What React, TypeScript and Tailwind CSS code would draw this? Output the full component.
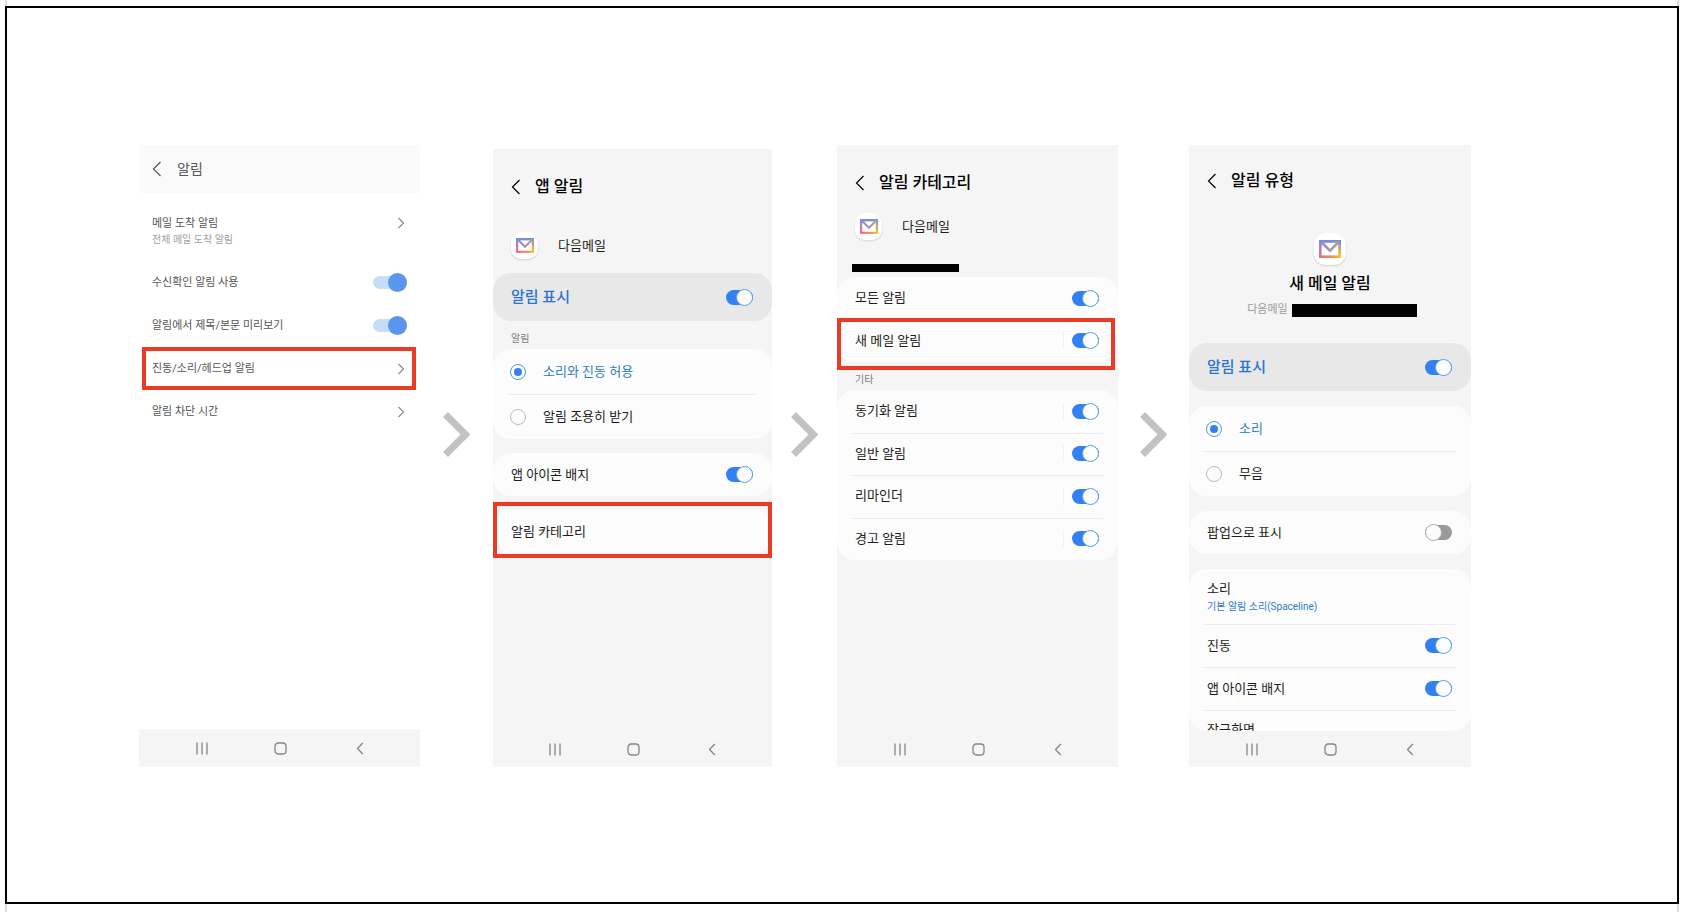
import { useId, type ReactNode } from "react";
import clsx from "clsx";

function BackIcon() {
  return (
    <svg viewBox="0 0 10 16" className="h-4 w-2.5" fill="none" aria-hidden="true">
      <path d="M8.5 1 1.5 8l7 7" stroke="currentColor" strokeWidth="1.2" />
    </svg>
  );
}

function ForwardIcon() {
  return (
    <svg viewBox="0 0 10 12" className="h-3 w-2.5" fill="none" aria-hidden="true">
      <path d="m1.5 1 5 5-5 5" stroke="#8a8a8a" strokeWidth="1.2" />
    </svg>
  );
}

function StepArrow() {
  return (
    <div className="flex justify-center self-start pt-[267px]">
      <svg viewBox="0 0 27 45" className="h-[45px] w-[27px]" fill="none" aria-hidden="true">
        <path d="M2.5 2.5 22.5 22.5l-20 20" stroke="#c2c2c2" strokeWidth="7" />
      </svg>
    </div>
  );
}

function MailLogo({ large = false }: { large?: boolean }) {
  const id = useId();
  return (
    <span
      className={clsx(
        "flex shrink-0 items-center justify-center bg-white shadow-[0_1px_2px_rgba(0,0,0,0.15)]",
        large ? "size-8 rounded-xl" : "size-[27px] rounded-[10px]",
      )}
    >
      <svg
        viewBox="0 0 22 18"
        className={large ? "h-[18px] w-[22px]" : "h-[15px] w-[18px]"}
        fill="none"
        aria-hidden="true"
      >
        <defs>
          <linearGradient id={`${id}-frame`} x1="0" y1="0" x2="1" y2="0">
            <stop offset="0" stopColor="#ea6a8c" />
            <stop offset="0.55" stopColor="#f08a5c" />
            <stop offset="1" stopColor="#f8bc2c" />
          </linearGradient>
          <linearGradient id={`${id}-fade`} x1="0" y1="0" x2="0" y2="1">
            <stop offset="0" stopColor="#6f8fe0" />
            <stop offset="0.2" stopColor="#7f92dc" stopOpacity="0.8" />
            <stop offset="0.85" stopColor="#9a80d8" stopOpacity="0" />
          </linearGradient>
          <linearGradient id={`${id}-flap`} x1="0" y1="0" x2="1" y2="0">
            <stop offset="0" stopColor="#7f8ee6" />
            <stop offset="0.5" stopColor="#b392a8" />
            <stop offset="1" stopColor="#a0a494" />
          </linearGradient>
        </defs>
        <rect x="1.3" y="1.3" width="19.4" height="15.4" stroke={`url(#${id}-frame)`} strokeWidth="2.6" />
        <rect x="1.3" y="1.3" width="19.4" height="15.4" stroke={`url(#${id}-fade)`} strokeWidth="2.6" />
        <path d="m2 1.8 9 8.8 9-8.8" stroke={`url(#${id}-flap)`} strokeWidth="2.6" />
      </svg>
    </span>
  );
}

function Switch({ id, on = true }: { id: string; on?: boolean }) {
  return (
    <input
      id={id}
      type="checkbox"
      role="switch"
      defaultChecked={on}
      className="relative h-[17px] w-[27px] shrink-0 appearance-none before:absolute before:inset-x-0 before:inset-y-px before:rounded-full before:bg-[#999] after:absolute after:left-0 after:size-[17px] after:rounded-full after:border after:border-[#aaa] after:bg-[#fcfcfc] checked:before:bg-[#3380f5] checked:after:left-2.5 checked:after:border-[#5b9fe0]"
    />
  );
}

function LightSwitch({ id }: { id: string }) {
  return (
    <input
      id={id}
      type="checkbox"
      role="switch"
      defaultChecked
      className="relative h-[19px] w-[34px] shrink-0 appearance-none before:absolute before:inset-x-0 before:inset-y-[3px] before:rounded-full before:bg-[#ddd] after:absolute after:left-0 after:size-[19px] after:rounded-full after:bg-[#aaa] checked:before:bg-[#c7dcfa] checked:after:left-[15px] checked:after:bg-[#5a95ef]"
    />
  );
}

function Highlight({ className }: { className: string }) {
  return (
    <div className={clsx("pointer-events-none absolute border-4 border-[#ea3c24]", className)} />
  );
}

function Card({ className, children }: { className: string; children: ReactNode }) {
  return (
    <div className={clsx("relative flex shrink-0 flex-col rounded-[18px] bg-[#fcfcfc]", className)}>
      {children}
    </div>
  );
}

function Divider() {
  return <div className="mx-[15px] -mb-px h-px shrink-0 bg-[#ececec]" />;
}

function SwitchRow({
  label,
  on = true,
  separated = false,
}: {
  label: string;
  on?: boolean;
  separated?: boolean;
}) {
  const id = useId();
  return (
    <div className="flex flex-1 items-center justify-between pr-[19px] pl-[18px]">
      <label htmlFor={id} className="text-[13px] leading-5">
        {label}
      </label>
      <span className={clsx("flex", separated && "border-l border-[#f1f1f1] pl-2")}>
        <Switch id={id} on={on} />
      </span>
    </div>
  );
}

function RadioRow({
  name,
  label,
  checked = false,
}: {
  name: string;
  label: string;
  checked?: boolean;
}) {
  return (
    <label className="flex flex-1 items-center gap-[17px] px-[17px] text-[13px] leading-5 has-checked:text-[#2f7cc4]">
      <input
        type="radio"
        name={name}
        defaultChecked={checked}
        className="relative size-4 shrink-0 appearance-none rounded-full border border-[#bbb] checked:border-[#4f97dc] checked:after:absolute checked:after:inset-[3px] checked:after:rounded-full checked:after:bg-[#3380f5]"
      />
      {label}
    </label>
  );
}

function MainSwitch({ className }: { className: string }) {
  const id = useId();
  return (
    <div
      className={clsx(
        "flex h-12 shrink-0 items-center justify-between rounded-[18px] bg-[#e8e8e8] pr-[19px] pl-[18px]",
        className,
      )}
    >
      <label htmlFor={id} className="text-[15px] leading-6 font-medium text-[#2a74d0]">
        알림 표시
      </label>
      <Switch id={id} />
    </div>
  );
}

function ScreenTitle({ className, children }: { className: string; children: ReactNode }) {
  return (
    <header
      className={clsx("flex h-6 shrink-0 items-center gap-3.5 pl-[18px] text-black", className)}
    >
      <button type="button" aria-label="뒤로">
        <BackIcon />
      </button>
      <h2 className="text-base font-medium">{children}</h2>
    </header>
  );
}

function AppRow({ className }: { className: string }) {
  return (
    <div className={clsx("flex h-[43px] shrink-0 items-center gap-5 pl-[18px]", className)}>
      <MailLogo />
      <span className="text-[13px] leading-5">다음메일</span>
    </div>
  );
}

function GroupLabel({ children }: { children: ReactNode }) {
  return (
    <div className="flex h-7 shrink-0 items-end pb-0.5 pl-[18px] text-[10px] leading-4 text-[#808080]">
      {children}
    </div>
  );
}

function NavBar({ className = "h-9" }: { className?: string }) {
  return (
    <nav
      className={clsx(
        "mt-auto grid shrink-0 grid-cols-3 bg-[#f5f5f5] pr-[21px] pl-[23px] text-[#858585]",
        className,
      )}
    >
      <button type="button" aria-label="최근 앱" className="flex items-center justify-center">
        <svg viewBox="0 0 12 13" className="h-[13px] w-3" fill="none" aria-hidden="true">
          <path d="M1 .5v12M6 .5v12M11 .5v12" stroke="currentColor" strokeWidth="1.3" />
        </svg>
      </button>
      <button type="button" aria-label="홈" className="flex items-center justify-center">
        <svg viewBox="0 0 13 13" className="size-[13px]" fill="none" aria-hidden="true">
          <rect x="1" y="1" width="11" height="11" rx="3.2" stroke="currentColor" strokeWidth="1.3" />
        </svg>
      </button>
      <button type="button" aria-label="뒤로" className="flex items-center justify-center">
        <svg viewBox="0 0 8 13" className="h-[13px] w-2" fill="none" aria-hidden="true">
          <path d="m6.8 1-5.3 5.5L6.8 12" stroke="currentColor" strokeWidth="1.3" />
        </svg>
      </button>
    </nav>
  );
}

function Phone({ className, children }: { className: string; children: ReactNode }) {
  return <section className={clsx("flex flex-col overflow-hidden", className)}>{children}</section>;
}

function MailSettings() {
  const receiptId = useId();
  const previewId = useId();
  return (
    <Phone className="h-[622px] bg-white text-[#555]">
      <header className="flex h-12 shrink-0 items-center gap-[15px] bg-[#fafafa] pl-[13px]">
        <button type="button" aria-label="뒤로">
          <BackIcon />
        </button>
        <h2 className="text-sm">알림</h2>
      </header>
      <div className="pt-2 text-[11px] leading-4">
        <button
          type="button"
          className="flex h-[60px] w-full items-start justify-between px-[13px] pt-[15px] text-left"
        >
          <span>
            <span className="block">메일 도착 알림</span>
            <span className="block text-[10px] text-[#a0a0a0]">전체 메일 도착 알림</span>
          </span>
          <span className="flex h-3.5 items-center">
            <ForwardIcon />
          </span>
        </button>
        <div className="flex h-[43px] items-center justify-between px-[13px]">
          <label htmlFor={receiptId}>수신확인 알림 사용</label>
          <LightSwitch id={receiptId} />
        </div>
        <div className="flex h-[43px] items-center justify-between px-[13px]">
          <label htmlFor={previewId}>알림에서 제목/본문 미리보기</label>
          <LightSwitch id={previewId} />
        </div>
        <div className="relative">
          <button type="button" className="flex h-[43px] w-full items-center justify-between px-[13px]">
            진동/소리/헤드업 알림
            <ForwardIcon />
          </button>
          <Highlight className="inset-y-0 right-1 left-[3px]" />
        </div>
        <button type="button" className="flex h-[43px] w-full items-center justify-between px-[13px]">
          알림 차단 시간
          <ForwardIcon />
        </button>
      </div>
      <NavBar className="h-[38px]" />
    </Phone>
  );
}

function AppNotifications() {
  return (
    <Phone className="h-[618px] bg-[#f5f5f5] text-[#1c1c1c]">
      <ScreenTitle className="mt-[26px]">앱 알림</ScreenTitle>
      <AppRow className="mt-[25px]" />
      <MainSwitch className="mt-1.5" />
      <GroupLabel>알림</GroupLabel>
      <Card className="h-[90px]">
        <RadioRow name="alert" label="소리와 진동 허용" checked />
        <Divider />
        <RadioRow name="alert" label="알림 조용히 받기" />
      </Card>
      <Card className="mt-3.5 h-[43px]">
        <SwitchRow label="앱 아이콘 배지" />
      </Card>
      <Card className="mt-3.5 h-[43px]">
        <button type="button" className="flex-1 px-[18px] text-left text-[13px] leading-5">
          알림 카테고리
        </button>
        <Highlight className="inset-x-0 -top-2 -bottom-[5px]" />
      </Card>
      <NavBar />
    </Phone>
  );
}

const otherCategories = ["동기화 알림", "일반 알림", "리마인더", "경고 알림"];

function NotificationCategories() {
  return (
    <Phone className="h-[622px] bg-[#f5f5f5] text-[#1c1c1c]">
      <ScreenTitle className="mt-[26px]">알림 카테고리</ScreenTitle>
      <AppRow className="mt-2.5" />
      <div className="mt-4 ml-[15px] h-2 w-[107px] shrink-0 bg-black" />
      <Card className="mt-[5px] h-[85px]">
        <SwitchRow label="모든 알림" />
        <Divider />
        <SwitchRow label="새 메일 알림" separated />
        <Highlight className="top-[41px] right-[3px] -bottom-2 left-0" />
      </Card>
      <GroupLabel>기타</GroupLabel>
      <Card className="h-[170px]">
        {otherCategories.map((label, i) => (
          <div key={label} className="flex flex-1 flex-col">
            {i > 0 && <Divider />}
            <SwitchRow label={label} separated />
          </div>
        ))}
      </Card>
      <NavBar />
    </Phone>
  );
}

function NotificationType() {
  return (
    <Phone className="h-[622px] bg-[#f5f5f5] text-[#1c1c1c]">
      <ScreenTitle className="mt-6">알림 유형</ScreenTitle>
      <div className="mt-10 flex shrink-0 flex-col items-center">
        <MailLogo large />
        <h3 className="mt-[7px] text-base font-medium text-black">새 메일 알림</h3>
        <div className="mt-0.5 flex h-6 items-center gap-1 pl-1 text-[11px] text-[#999]">
          다음메일
          <span className="h-[13px] w-[125px] bg-black" />
        </div>
      </div>
      <MainSwitch className="mt-[21px]" />
      <Card className="mt-[15px] h-[90px]">
        <RadioRow name="type" label="소리" checked />
        <Divider />
        <RadioRow name="type" label="무음" />
      </Card>
      <Card className="mt-[15px] h-[43px]">
        <SwitchRow label="팝업으로 표시" on={false} />
      </Card>
      <div className="mt-[15px] min-h-0 flex-1 overflow-hidden rounded-[18px] bg-[#fcfcfc]">
        <button
          type="button"
          className="flex h-[55px] w-full flex-col justify-center px-[18px] text-left"
        >
          <span className="text-[13px] leading-5">소리</span>
          <span className="text-[10px] leading-4 text-[#2f7cc4]">기본 알림 소리(Spaceline)</span>
        </button>
        <Divider />
        <div className="flex h-[43px]">
          <SwitchRow label="진동" />
        </div>
        <Divider />
        <div className="flex h-[43px]">
          <SwitchRow label="앱 아이콘 배지" />
        </div>
        <Divider />
        {/* last row scrolls under the navigation bar */}
        <div className="flex h-10 items-center px-[18px] text-[13px] leading-5">잠금화면</div>
      </div>
      <NavBar />
    </Phone>
  );
}

export default function App() {
  return (
    <div className="min-h-screen bg-white font-[Roboto,'Noto_Sans_CJK_KR',sans-serif]">
      <div className="mx-[5px] flex min-h-screen flex-col border-x-2 border-[#dcdcdc] pt-1.5 pb-2">
        <main className="-mx-0.5 grid flex-1 grid-cols-[132fr_281fr_73fr_279fr_65fr_281fr_71fr_282fr_206fr] border-2 border-black pt-[137px] pb-[134px]">
          <div />
          <MailSettings />
          <StepArrow />
          <div className="self-start pt-1">
            <AppNotifications />
          </div>
          <StepArrow />
          <NotificationCategories />
          <StepArrow />
          <NotificationType />
        </main>
      </div>
    </div>
  );
}
